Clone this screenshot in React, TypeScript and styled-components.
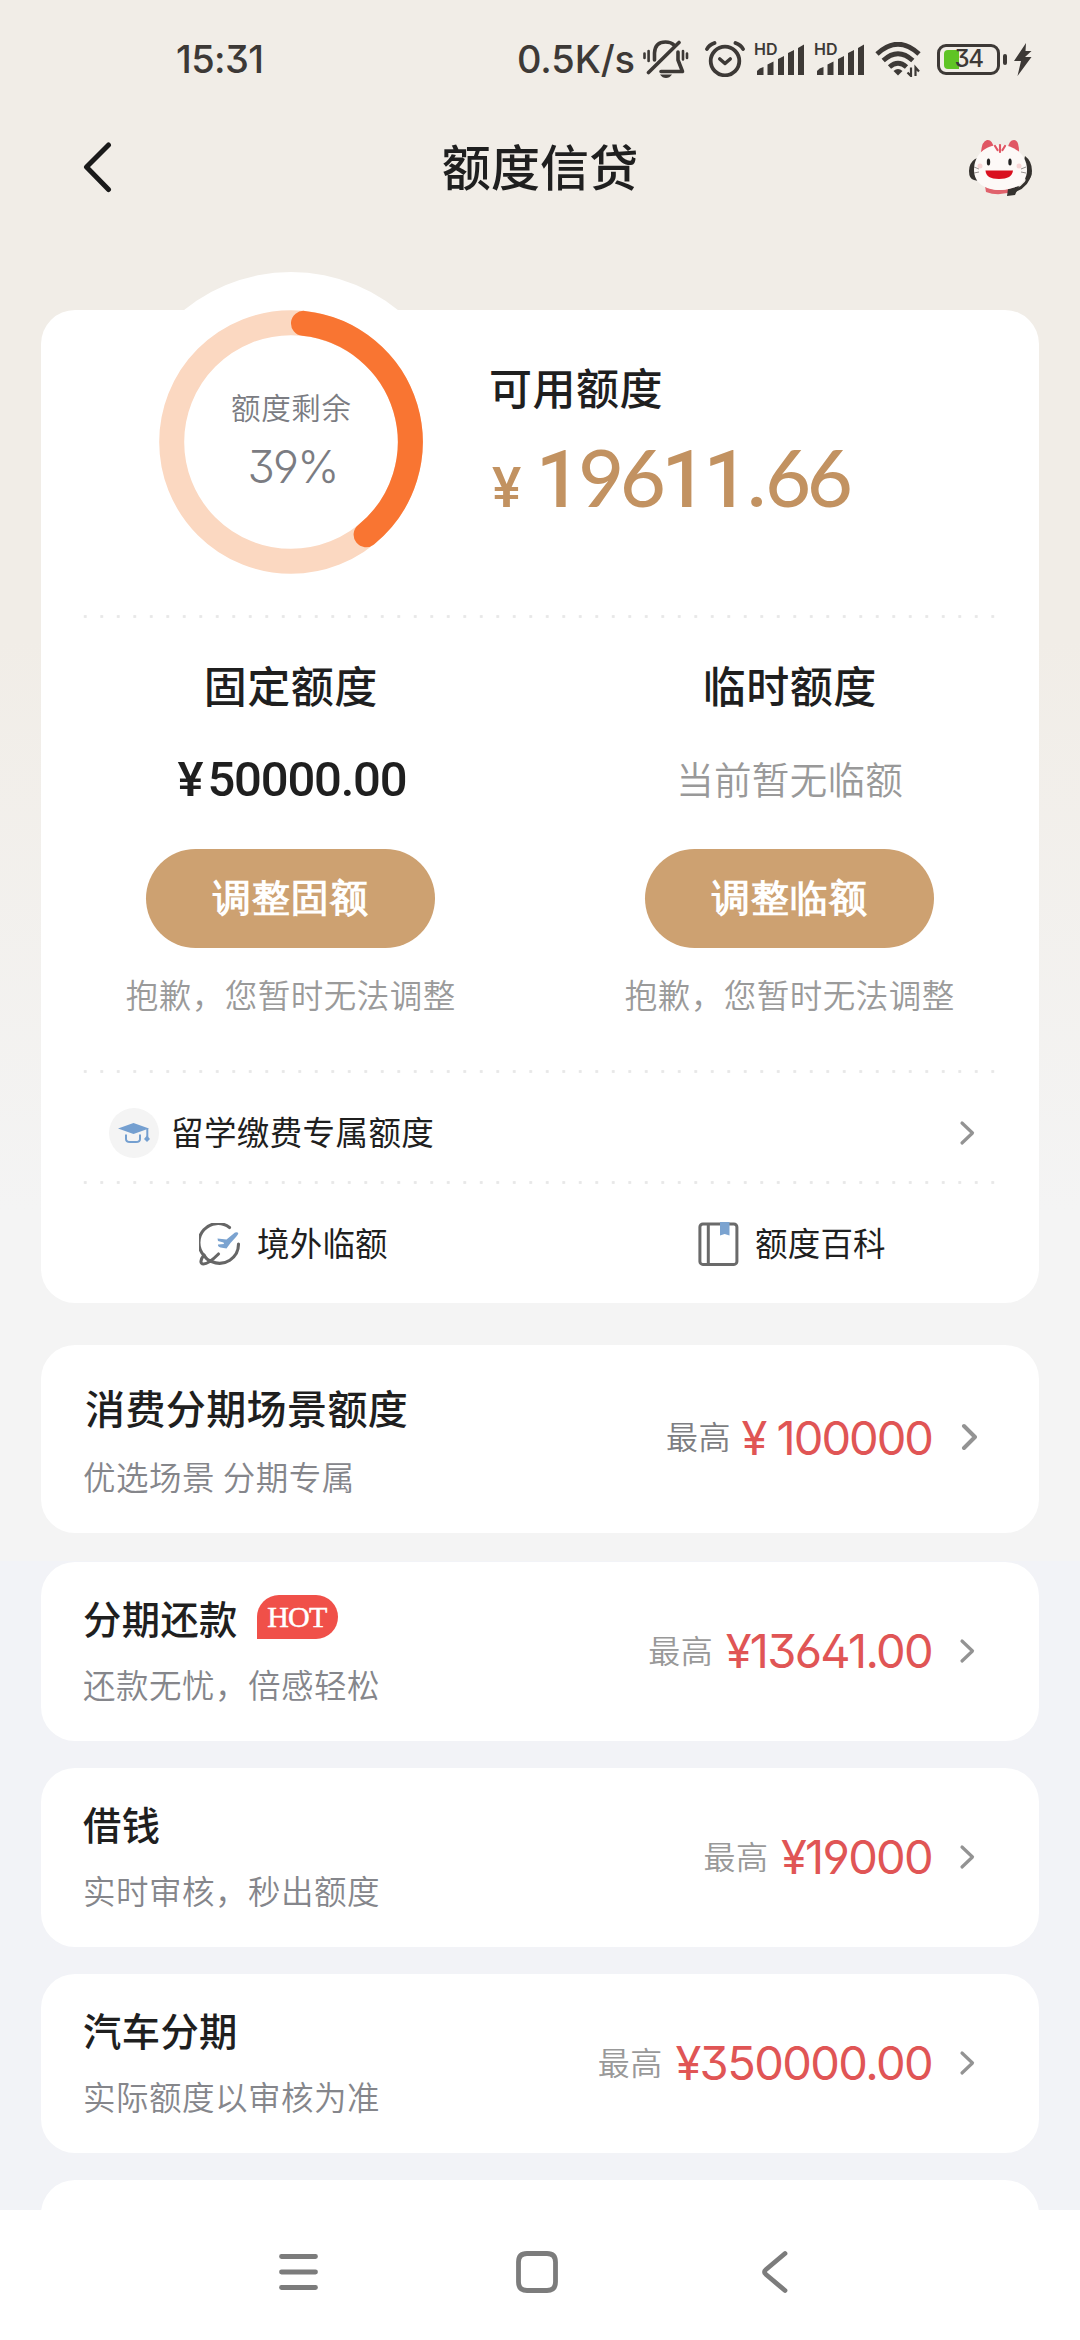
import React from "react";
import styled, { createGlobalStyle } from "styled-components";

const CJK = `"Noto Sans CJK SC", sans-serif`;
const NUM = `Inter, "Noto Sans CJK SC", sans-serif`;
const DIN = `Roboto, "Noto Sans CJK SC", sans-serif`;

const Global = createGlobalStyle`
  * { box-sizing: border-box; }
  body { margin: 0; background: #f2f3f7; }
  svg { display: block; flex: none; }
`;

const Screen = styled.div`
  width: 1080px;
  height: 2340px;
  overflow: hidden;
  display: flex;
  flex-direction: column;
  font-family: ${CJK};
  color: #1f1f1f;
  background: linear-gradient(#f1ede7 0, #f1ede7 640px, #f4f4f4 1210px, #f4f4f4 1561px, #f2f3f7 1561px);
`;

/* The bottom padding balances the ideographs' low position in their line box. */
const Label = styled.span<{ size: number; gap?: number; weight?: number; color?: string }>`
  display: block;
  font-size: ${(p) => p.size}px;
  letter-spacing: ${(p) => p.gap ?? 0}px;
  margin-right: ${(p) => -(p.gap ?? 0)}px;
  font-weight: ${(p) => p.weight ?? 400};
  color: ${(p) => p.color ?? "#1f1f1f"};
  line-height: 1;
  padding-bottom: 0.11em;
  white-space: pre;
`;

const StatusBar = styled.header`
  height: 118px;
  padding: 0 47px 0 176px;
  display: flex;
  align-items: center;
  justify-content: space-between;
  color: #3d3936;
`;
const StatusText = styled.span<{ gap: number }>`
  font: 450 38px/1 ${NUM};
  font-feature-settings: "ss01", "cv09";
  letter-spacing: ${(p) => p.gap}px;
  white-space: nowrap;
`;
const StatusGroup = styled.div<{ gap: number }>`
  display: flex;
  align-items: center;
  gap: ${(p) => p.gap}px;
`;
const Signal = styled.div`
  width: 50px;
  height: 32px;
  position: relative;
`;
const Hd = styled.span`
  position: absolute;
  left: -1px;
  top: -4px;
  font: 600 16px/20px ${NUM};
`;
const Battery = styled.div`
  width: 63px;
  height: 31px;
  border: 3px solid #3d3936;
  border-radius: 9px;
  position: relative;
  display: flex;
  align-items: center;
  justify-content: center;
`;
const Charge = styled.i`
  position: absolute;
  left: 4px;
  top: 3px;
  width: 15px;
  height: 19px;
  border-radius: 4px 0 0 4px;
  background: #5fc425;
`;
const ChargeText = styled.span`
  position: relative;
  font: 450 24px/1 ${NUM};
  font-feature-settings: "cv09";
  letter-spacing: -1.4px;
`;
const Nub = styled.i`
  width: 4px;
  height: 11px;
  border-radius: 2px;
  background: #3d3936;
  margin: 0 4px 0 0;
`;

const TitleBar = styled.nav`
  height: 98px;
  padding: 0 47px;
  display: grid;
  grid-template-columns: 1fr auto 1fr;
  align-items: center;
  > :first-child { margin-left: 35px; }
  > :last-child { justify-self: end; }
`;

const Content = styled.main`
  flex: 1;
  min-height: 0;
  padding: 94px 41px 0;
  overflow: hidden;
`;
const Card = styled.section`
  background: #fff;
  border-radius: 34px;
`;
const QuotaCard = styled(Card)`
  height: 993px;
`;
const Summary = styled.div`
  height: 305px;
  display: flex;
  align-items: flex-start;
`;
const RingBox = styled.div`
  width: 340px;
  height: 340px;
  margin: -38px 28px 0 80px;
  border-radius: 50%;
  background: #fff;
  display: grid;
  place-items: center;
  > * { grid-area: 1 / 1; }
`;
const RingText = styled.div`
  display: flex;
  flex-direction: column;
  align-items: center;
  gap: 20px;
  padding-bottom: 2px;
`;
const Percent = styled.span`
  font: 340 45px/46px ${NUM};
  font-feature-settings: "ss01", "cv09";
  letter-spacing: -1.8px;
  padding-left: 3px;
  color: #7b7c82;
`;
const Available = styled.div`
  padding-top: 55px;
`;
const BigAmount = styled.div`
  display: flex;
  align-items: baseline;
  margin: 24px 0 0 3px;
  color: #c29261;
  font: 480 79px/80px ${DIN};
  letter-spacing: -2.7px;
`;
const BigYen = styled.span`
  font-size: 55px;
  width: 44px;
`;
const Round = styled.span`
  font-family: Lato, sans-serif;
  font-weight: 500;
  letter-spacing: -4.1px;
`;

const Dots = styled.div`
  height: 3px;
  margin: 0 37px 0 35.5px;
  background: radial-gradient(circle at center, #e8e8e8 1.3px, transparent 1.9px) 0 0 / 16.5px 3px repeat-x;
`;

const Columns = styled.div<{ h: number }>`
  height: ${(p) => p.h}px;
  display: grid;
  grid-template-columns: 1fr 1fr;
`;
const Column = styled.div`
  display: flex;
  flex-direction: column;
  align-items: center;
  padding-top: 45px;
`;
const ValueLine = styled.div`
  height: 62px;
  margin-top: 38px;
  display: flex;
  align-items: center;
`;
const FixedAmount = styled.span`
  font: 490 49px/1 ${DIN};
  letter-spacing: -1.2px;
  padding-left: 3px;
  span { margin-right: 5px; }
`;
const AdjustButton = styled.button`
  width: 289px;
  height: 99px;
  margin: 38px 0 30px;
  padding: 3px 0 0;
  border: 0;
  border-radius: 50px;
  background: #cda171;
  display: flex;
  align-items: center;
  justify-content: center;
`;
const StudyRow = styled.div`
  height: 108px;
  padding: 12px 63px 0 68px;
  display: flex;
  align-items: center;
  > svg:last-child { margin-left: auto; }
`;
const CapBadge = styled.div`
  width: 50px;
  height: 50px;
  border-radius: 50%;
  background: #f4f4f4;
  display: flex;
  align-items: center;
  justify-content: center;
  margin-right: 12px;
`;
const LinkItem = styled.div`
  display: flex;
  align-items: center;
  padding: 1px 0 0 158px;
  gap: 16px;
`;

const Offer = styled(Card)<{ h: number; gap: number }>`
  height: ${(p) => p.h}px;
  margin-top: ${(p) => p.gap}px;
  padding: 0 62px 0 42px;
  display: flex;
  align-items: center;
  justify-content: space-between;
`;
const OfferText = styled.div<{ lead: boolean }>`
  display: flex;
  flex-direction: column;
  gap: ${(p) => (p.lead ? 28 : 25)}px;
  margin-top: ${(p) => (p.lead ? 4 : -2)}px;
`;
const OfferTitle = styled.div<{ inset: number }>`
  display: flex;
  align-items: center;
  height: 46px;
  gap: 20px;
  padding-left: ${(p) => p.inset}px;
`;
const Hot = styled.span`
  width: 81px;
  height: 44px;
  margin-top: -6px;
  padding-right: 2px;
  border-radius: 22px 22px 22px 0;
  background: #f05049;
  color: #fff;
  font: 30px/43px "Liberation Serif", serif;
  -webkit-text-stroke: 0.5px #fff;
  text-align: center;
  letter-spacing: -0.7px;
`;
const OfferValue = styled.div<{ lead: boolean }>`
  display: flex;
  align-items: center;
  gap: ${(p) => (p.lead ? 11 : 13)}px;
  margin-top: ${(p) => (p.lead ? -4 : -2)}px;
  > svg { margin-left: ${(p) => (p.lead ? 17 : 14)}px; }
  margin-right: ${(p) => (p.lead ? 0 : 1)}px;
`;
const Amount = styled.span<{ gap: number }>`
  font: 390 47px/1 ${NUM};
  font-feature-settings: "ss01", "cv09";
  letter-spacing: ${(p) => p.gap}px;
  color: #e05555;
  white-space: pre;
`;

const NavBar = styled.footer`
  height: 130px;
  background: #fff;
  display: flex;
  align-items: center;
  padding: 0 292px 7px 278px;
  justify-content: space-between;
  > :nth-child(2) { margin-right: 7px; }
`;

const BellOff = () => (
  <svg width="46" height="38" viewBox="0 0 46 38" fill="none" stroke="#3d3936" strokeWidth="3.6" strokeLinecap="round">
    <path d="M11.5 20V13Q12 2 22.500 2Q28 2 31 5" />
    <path d="M5.500 32.500L36 2.500" />
    <path d="M35 12V20L39.500 31.500H18" strokeLinejoin="round" />
    <path d="M17 34.500H29Q26.500 38 23 38T17 34.500Z" fill="#3d3936" stroke="none" />
    <path d="M1.500 13.500V18M5.600 11V21M40 11V19.500M44 13.500V18" strokeWidth="2.600" />
  </svg>
);
const Alarm = () => (
  <svg width="40" height="36" viewBox="0 0 40 36" fill="none" stroke="#3d3936" strokeLinecap="round">
    <circle cx="20" cy="20" r="14.300" strokeWidth="3.800" />
    <path d="M2 8Q4 4 9.500 2M38 8Q36 4 30.500 2" strokeWidth="3.800" />
    <path d="M14.800 18L20 22.500L25.200 18" strokeWidth="3.600" strokeLinejoin="round" />
  </svg>
);
const Bars = () => (
  <svg width="50" height="32" viewBox="0 0 50 32" fill="#3d3936">
    <path d="M2 32V28Q4 25 8.500 24V32ZM12.500 32V21.500L18.500 18.500V32ZM23 32V16L29 13V32ZM33 32V10L39 7V32ZM43 32V5L49 1.500V32Z" />
  </svg>
);
const Wifi = () => (
  <svg width="46" height="35" viewBox="0 0 46 35" fill="none" stroke="#3d3936" strokeWidth="4.800">
    <path d="M2 12Q23 -7.500 44 12" />
    <path d="M8.200 18.500Q23 5 37.800 18.500" />
    <path d="M14.500 25Q23 17.500 31.500 25" />
    <path d="M18.500 29Q23 25 27.500 29L23 33.500Z" fill="#3d3936" stroke="none" />
    <path d="M36 25.500V34L32.500 30.500M40.500 34V25.500L44 29.500" strokeWidth="2.200" />
  </svg>
);
const Bolt = () => (
  <svg width="20" height="33" viewBox="0 0 20 33" fill="#3d3936">
    <path d="M13 0L1 18H8L4.500 33L18.500 14H12L18.500 8H12.500Z" />
  </svg>
);
const BackArrow = () => (
  <svg width="32" height="52" viewBox="0 0 32 52" fill="none" stroke="#1a1a1a" strokeWidth="5" strokeLinecap="round" strokeLinejoin="round">
    <path d="M26.500 4L4.500 26L26.500 48.500" />
  </svg>
);
const Cat = () => (
  <svg width="65" height="57" viewBox="0 0 65 57">
    <path d="M7 20Q1 24 1 32T6 41L10 42V19ZM57 17Q64 22 64 32Q64 40 58 42L54 30Z" fill="#35322f" />
    <path d="M62 34Q60 47 46 52" fill="none" stroke="#35322f" strokeWidth="3" />
    <path d="M17 47Q31 55 46 47V52Q31 58 18 53Z" fill="#e0626c" />
    <path d="M40 50L51 47L47 56L39 57Z" fill="#35322f" />
    <path d="M13 13Q14 2 19 1T26 9ZM40 9Q41 1 46 1T51 13Z" fill="#e05663" />
    <path d="M32 6C47 6 59 16 59 31C59 44 48 51 32 51C17 51 6 44 6 31C6 16 17 6 32 6Z" fill="#fdf9f7" />
    <path d="M27 7L29.500 11M32 6V13M37 7L34.500 11" stroke="#e05663" strokeWidth="2.200" strokeLinecap="round" />
    <ellipse cx="20.500" cy="23" rx="1.700" ry="3.600" fill="#222" />
    <ellipse cx="42" cy="23" rx="1.700" ry="3.600" fill="#222" />
    <path d="M17.500 31.500H45Q44 40 31 40T17.500 31.500Z" fill="#d9101f" />
    <path d="M6 28L11 30M6 34L11 33M58 28L53 30M58 34L53 33" stroke="#8b8482" strokeWidth="0.900" />
    <circle cx="12" cy="27" r="2.500" fill="#f7d5d5" />
    <circle cx="51" cy="27" r="2.500" fill="#f7d5d5" />
  </svg>
);
const Ring = ({ from, to }: { from: number; to: number }) => {
  const r = 119.3;
  const at = (deg: number) => {
    const a = (deg * Math.PI) / 180;
    return `${132 + r * Math.sin(a)} ${132 - r * Math.cos(a)}`;
  };
  return (
    <svg width="264" height="264" viewBox="0 0 264 264" fill="none" strokeWidth="25">
      <circle cx="132" cy="132" r={r} stroke="#fbd8c1" />
      <path d={`M${at(from)}A${r} ${r} 0 0 1 ${at(to)}`} stroke="#f97532" strokeLinecap="round" />
    </svg>
  );
};
const Chevron = ({ bold }: { bold?: boolean }) => (
  <svg width="17" height="28" viewBox="0 0 17 28" fill="none" stroke="#939393" strokeWidth={bold ? 4 : 3.2} strokeLinecap="round" strokeLinejoin="round">
    <path d={bold ? "M4 3L15 14L4 25" : "M3 4L13.500 14L3 24"} />
  </svg>
);
const GradCap = () => (
  <svg width="32" height="21" viewBox="0 0 32 21" fill="#749fd0">
    <path d="M15.500 0L31 5.500L15.500 11L0 5.500Z" />
    <path d="M8 11.500V16Q8 19 12 19H18Q22 19 22 16V11.500" fill="none" stroke="#749fd0" strokeWidth="2" />
    <path d="M29.300 5.500V14" stroke="#749fd0" strokeWidth="2" />
    <path d="M29 12.500L32 16L29 19L26 16Z" />
  </svg>
);
const Globe = () => (
  <svg width="42" height="43" viewBox="0 0 42 43" fill="none" strokeLinecap="round" strokeLinejoin="round">
    <path d="M30.500 4.500A19 19 0 0 0 5 32.500M39.500 21A19 19 0 0 1 12.500 38.500" stroke="#666" strokeWidth="3.100" />
    <path d="M5 32C1 37 1 41 4.500 41C9 41 15 35.500 19.500 31M5 32Q7.500 37 12.500 38.500" stroke="#666" strokeWidth="3.100" />
    <path d="M18.500 15.500L27.500 16.500L36 9.500Q38.800 8.500 39.300 10.500Q39 12 31.500 20L27.500 25.500L21.500 24.500Q18.500 23.500 19 21.500L25 21L24.500 19.500L19 18Z" fill="#7ba3d0" />
  </svg>
);
const Book = () => (
  <svg width="41" height="44" viewBox="0 0 41 44" fill="none" stroke="#6a6a6a" strokeWidth="3">
    <rect x="1.900" y="1.900" width="37" height="40.500" rx="3" />
    <path d="M10.300 2V42" />
    <path d="M22 0H31.500V13.500L26.700 12L22 13.500Z" fill="#7ba3d0" stroke="none" />
  </svg>
);
const NavIcon = ({ d, w }: { d: string; w: number }) => (
  <svg width={w} height="44" viewBox={`0 0 ${w} 44`} fill="none" stroke="#7c7c7c" strokeWidth="4.800" strokeLinecap="round" strokeLinejoin="round">
    <path d={d} />
  </svg>
);

const offers = [
  { title: "消费分期场景额度", sub: "优选场景 分期专属", amount: "¥ 100000", h: 188, gap: 42, size: 40, lead: true, tint: "#7d7e82", ls: -2 },
  { title: "分期还款", sub: "还款无忧，倍感轻松", amount: "¥13641.00", h: 179, gap: 29, lead: false, hot: true, ls: -1.7 },
  { title: "借钱", sub: "实时审核，秒出额度", amount: "¥19000", h: 179, gap: 27, lead: false, ls: -1.7 },
  { title: "汽车分期", sub: "实际额度以审核为准", amount: "¥350000.00", h: 179, gap: 27, lead: false, ls: -1.6 },
];

export default function App() {
  return (
    <Screen>
      <Global />
      <StatusBar>
        <StatusText gap={-0.6}>15:31</StatusText>
        <StatusGroup gap={8}>
          <StatusText gap={-0.1}>0.5K/s</StatusText>
          <StatusGroup gap={16}>
            <BellOff />
            <StatusGroup gap={10}>
              <Alarm />
              {["sim1", "sim2"].map((sim) => (
                <Signal key={sim}>
                  <Bars />
                  <Hd>HD</Hd>
                </Signal>
              ))}
              <Wifi />
            </StatusGroup>
            <StatusGroup gap={2.5}>
              <Battery>
                <Charge />
                <ChargeText>34</ChargeText>
              </Battery>
              <Nub />
              <Bolt />
            </StatusGroup>
          </StatusGroup>
        </StatusGroup>
      </StatusBar>

      <TitleBar>
        <BackArrow />
        <Label size={49} gap={0.2} weight={500}>额度信贷</Label>
        <Cat />
      </TitleBar>

      <Content>
        <QuotaCard>
          <Summary>
            <RingBox>
              <Ring from={6} to={141} />
              <RingText>
                <Label size={29.5} gap={0.7} weight={350} color="#7b7c82">额度剩余</Label>
                <Percent>39%</Percent>
              </RingText>
            </RingBox>
            <Available>
              <Label size={43} gap={0.5} weight={500}>可用额度</Label>
              <BigAmount>
                <BigYen>¥</BigYen>
                <span>1<Round>96</Round>11.<Round>66</Round></span>
              </BigAmount>
            </Available>
          </Summary>
          <Dots />
          <Columns h={452}>
            <Column>
              <Label size={43} gap={0.5} weight={500}>固定额度</Label>
              <ValueLine>
                <FixedAmount><span>¥</span>50000.00</FixedAmount>
              </ValueLine>
              <AdjustButton><Label size={38} gap={0.7} weight={700} color="#fff">调整固额</Label></AdjustButton>
              <Label size={32.5} gap={0.5} weight={350} color="#9a9a9a">抱歉，您暂时无法调整</Label>
            </Column>
            <Column>
              <Label size={43} gap={0.5} weight={500}>临时额度</Label>
              <ValueLine>
                <Label size={37.5} gap={0.3} weight={350} color="#999">当前暂无临额</Label>
              </ValueLine>
              <AdjustButton><Label size={38} gap={0.7} weight={700} color="#fff">调整临额</Label></AdjustButton>
              <Label size={32.5} gap={0.5} weight={350} color="#9a9a9a">抱歉，您暂时无法调整</Label>
            </Column>
          </Columns>
          <Dots />
          <StudyRow>
            <CapBadge><GradCap /></CapBadge>
            <Label size={32.5} gap={0.4}>留学缴费专属额度</Label>
            <Chevron />
          </StudyRow>
          <Dots />
          <Columns h={119}>
            <LinkItem>
              <Globe />
              <Label size={32.5} gap={0.2}>境外临额</Label>
            </LinkItem>
            <LinkItem>
              <Book />
              <Label size={32.5} gap={0.2}>额度百科</Label>
            </LinkItem>
          </Columns>
        </QuotaCard>

        {offers.map((o) => (
          <Offer key={o.title} h={o.h} gap={o.gap}>
            <OfferText lead={o.lead}>
              <OfferTitle inset={o.lead ? 2 : 0}>
                <Label size={o.size ?? 38.3} gap={0.4} weight={500}>{o.title}</Label>
                {o.hot && <Hot>HOT</Hot>}
              </OfferTitle>
              <Label size={32.5} gap={0.5} weight={350} color="#85868b">{o.sub}</Label>
            </OfferText>
            <OfferValue lead={o.lead}>
              <Label size={32} gap={0.5} weight={350} color={o.tint ?? "#999"}>最高</Label>
              <Amount gap={o.ls}>{o.amount}</Amount>
              <Chevron bold={o.lead} />
            </OfferValue>
          </Offer>
        ))}
        <Offer h={179} gap={27} />
      </Content>

      <NavBar>
        <NavIcon w={42} d="M3.500 6.500H37.500M3.500 22H37.500M3.500 37.500H37.500" />
        <NavIcon w={44} d="M12 3.500H32Q40.500 3.500 40.500 12V32Q40.500 40.500 32 40.500H12Q3.500 40.500 3.500 32V12Q3.500 3.500 12 3.500Z" />
        <NavIcon w={28} d="M25 3.500L6 19.500Q3 22 6 24.500L25 40.500" />
      </NavBar>
    </Screen>
  );
}
